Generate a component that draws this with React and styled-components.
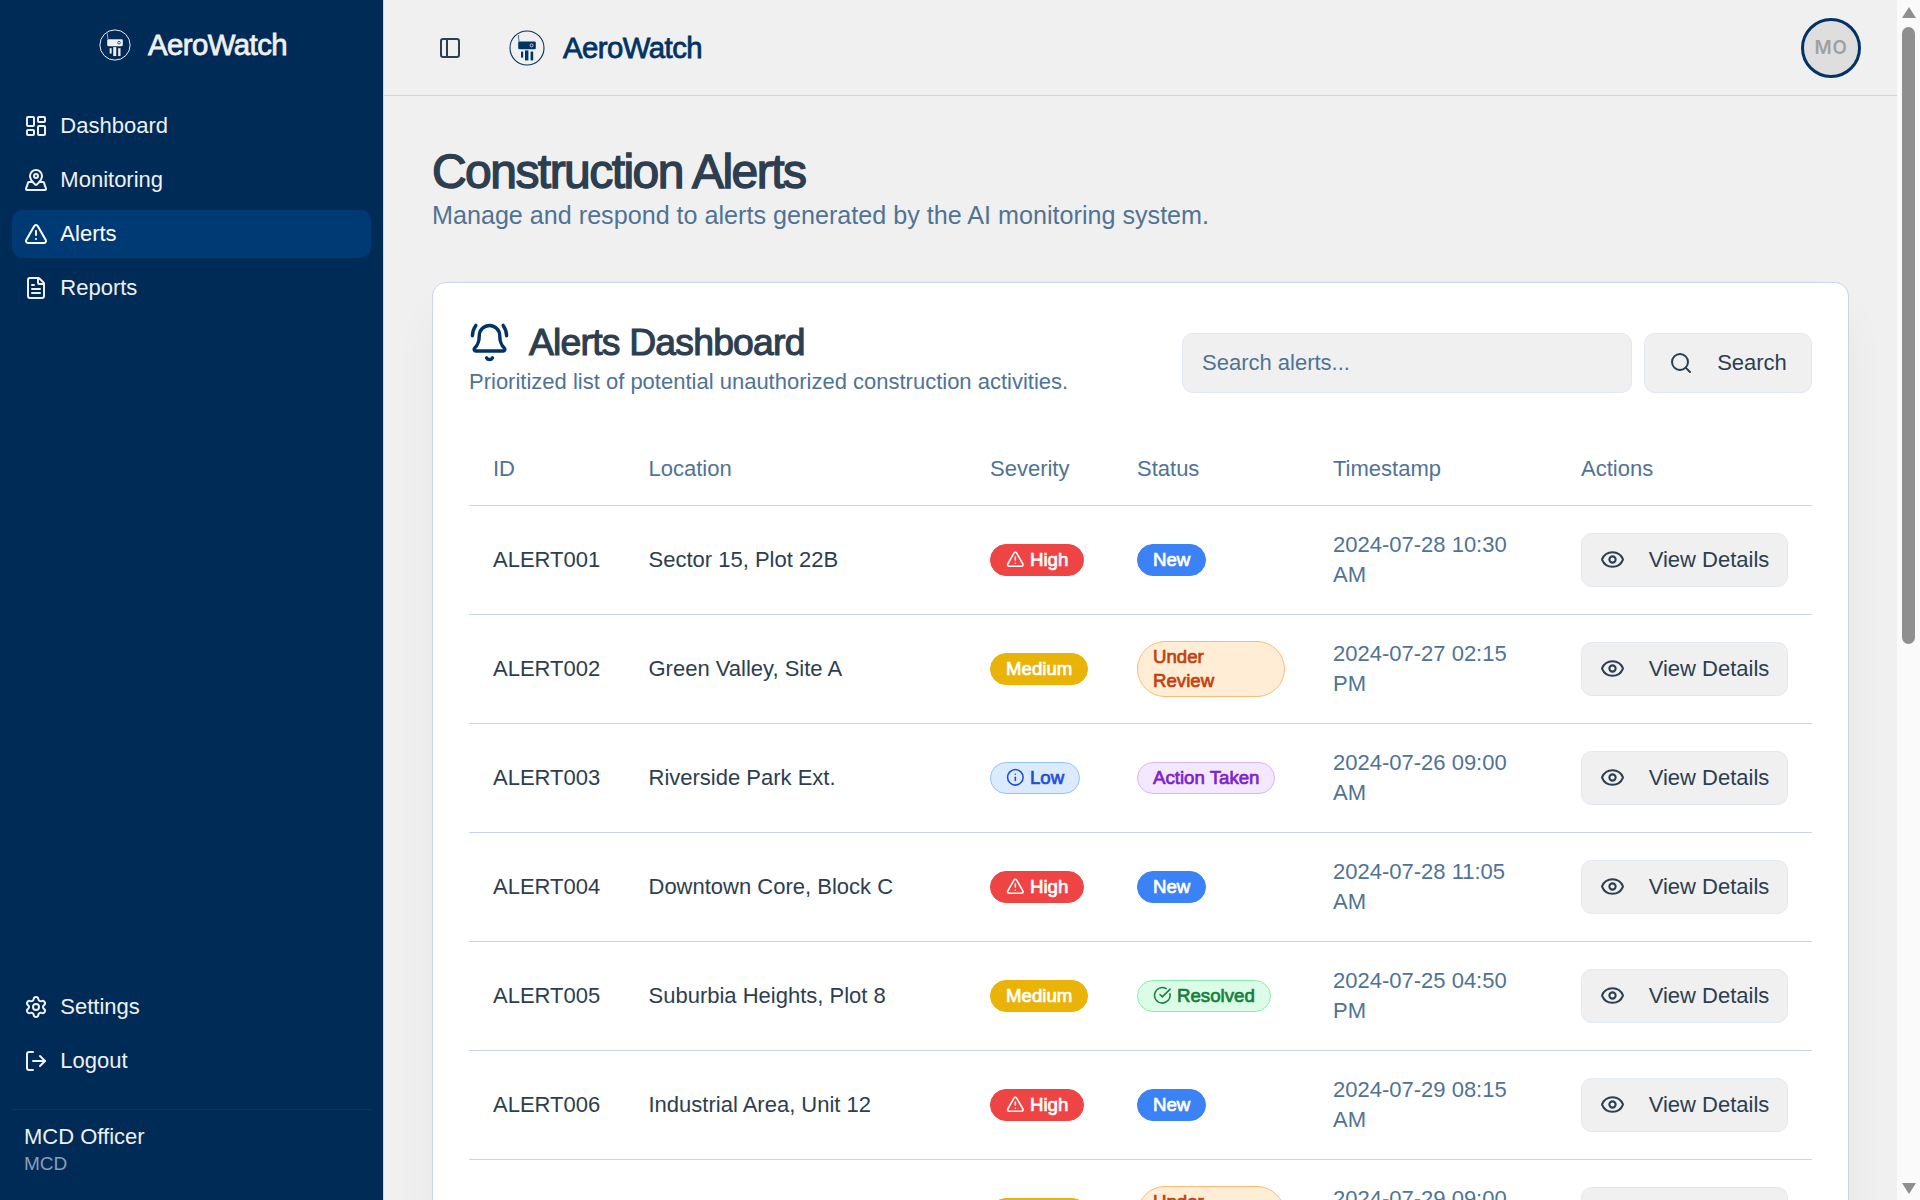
import { createGlobalStyle, styled } from "styled-components";
import {
  BellRing,
  CircleCheckBig,
  Eye,
  FileText,
  Info,
  LayoutDashboard,
  LogOut,
  MapPinned,
  PanelLeft,
  Search,
  Settings,
  TriangleAlert,
} from "lucide-react";

const GlobalStyle = createGlobalStyle`
  html, body {
    margin: 0;
    height: 100%;
    overflow: hidden;
    background: #f0f0f0;
    font-family: "Liberation Sans", Arial, sans-serif;
  }
  * {
    box-sizing: border-box;
  }
`;

const Shell = styled.div`
  display: flex;
  height: 100vh;
`;

const Sidebar = styled.aside`
  width: 384px;
  flex: none;
  display: flex;
  flex-direction: column;
  background: #002b57;
  border-right: 1px solid #c9d5e4;
  color: #eef0f2;
`;

const SidebarBrand = styled.div`
  height: 90px;
  display: flex;
  align-items: center;
  justify-content: center;
  gap: 17px;
  padding-left: 3px;
  color: #f0f0f0;
`;

const BrandName = styled.span`
  font-size: 29.33px;
  letter-spacing: -0.55px;
  -webkit-text-stroke: 0.8px currentColor;
`;

const NavList = styled.nav`
  display: flex;
  flex-direction: column;
  gap: 6px;
  padding: 12px 12px 0;
`;

const BottomNav = styled(NavList)`
  margin-top: auto;
  padding-top: 0;
  padding-bottom: 24px;
`;

const NavItem = styled.a`
  height: 48px;
  display: flex;
  align-items: center;
  gap: 12.33px;
  padding: 0 12px;
  border-radius: 10.67px;
  font-size: 22px;
  color: ${(p) => (p.$active ? "#ffffff" : "#eef0f2")};
  background: ${(p) => (p.$active ? "#003a75" : "transparent")};
`;

const UserBox = styled.div`
  margin: 0 12px;
  padding: 12px 12px 24px;
  border-top: 1px solid #00396f;
`;

const UserName = styled.div`
  font-size: 22px;
  line-height: 29px;
  color: #eef0f2;
`;

const UserRole = styled.div`
  font-size: 19px;
  line-height: 25px;
  color: #8c9db2;
`;

const Main = styled.main`
  flex: 1;
  min-width: 0;
  overflow-y: auto;
  scrollbar-width: none;
  background: #f0f0f0;
`;

// the browser hides real scrollbars when photographing, so the rail is drawn
const ScrollRail = styled.div`
  width: 23px;
  flex: none;
  display: flex;
  flex-direction: column;
  align-items: center;
  padding: 7px 0 6px;
  background: #fafafa;
`;

const ScrollArrow = styled.div`
  width: 0;
  height: 0;
  flex: none;
  border-left: 7.5px solid transparent;
  border-right: 7.5px solid transparent;
  border-${(p) => (p.$down ? "top" : "bottom")}: 11px solid #8f8f8f;
  margin-top: ${(p) => (p.$down ? "auto" : "0")};
`;

const ScrollThumb = styled.div`
  width: 13px;
  height: 617px;
  margin-top: 9px;
  border-radius: 7px;
  background: #8f8f8f;
`;

const TopBar = styled.header`
  position: sticky;
  top: 0;
  z-index: 5;
  height: 96px;
  display: flex;
  align-items: center;
  padding: 0 36px 0 54px;
  background: #f0f0f0;
  border-bottom: 1px solid #c9d5e4;
  color: #003366;
`;

const ToggleButton = styled.button`
  display: flex;
  padding: 0;
  border: 0;
  background: none;
  color: #2c3e50;
  margin-right: 47px;
`;

const TopBrand = styled.div`
  display: flex;
  align-items: center;
  gap: 18px;
`;

const Avatar = styled.div`
  margin-left: auto;
  width: 60px;
  height: 60px;
  display: flex;
  align-items: center;
  justify-content: center;
  border-radius: 50%;
  border: 3px solid #003366;
  background: #dedede;
  color: #a0a0a0;
  font-family: Inter, sans-serif;
  font-weight: 600;
  font-size: 18.67px;
  letter-spacing: 0.8px;
`;

const Content = styled.div`
  padding: 49px 48px 48px;
`;

const PageTitle = styled.h1`
  margin: 0;
  font-size: 48px;
  line-height: 54px;
  font-weight: 400;
  letter-spacing: -1.55px;
  color: #2c3e50;
  -webkit-text-stroke: 1.4px currentColor;
`;

const PageSubtitle = styled.p`
  margin: 0 0 51px;
  font-size: 25.15px;
  line-height: 32px;
  color: #4f7396;
`;

const Card = styled.section`
  padding: 36px;
  background: #ffffff;
  border: 1px solid #c9d5e4;
  border-radius: 14px;
  box-shadow: 0 26px 50px -10px rgba(0, 0, 0, 0.07);
`;

const CardHead = styled.div`
  display: flex;
  justify-content: space-between;
  align-items: flex-end;
  height: 77px;
  margin-bottom: 35px;
`;

const CardTitleRow = styled.div`
  display: flex;
  align-items: center;
  gap: 19px;
  margin-bottom: 2px;
  color: #003366;
`;

const CardTitle = styled.h2`
  margin: 0;
  font-size: 37.33px;
  line-height: 46px;
  font-weight: 400;
  letter-spacing: -0.8px;
  color: #2c3e50;
  -webkit-text-stroke: 1.1px currentColor;
`;

const CardSubtitle = styled.p`
  margin: 0;
  font-size: 22px;
  line-height: 29px;
  color: #4f7396;
`;

const SearchRow = styled.form`
  display: flex;
  gap: 12px;
  margin-bottom: 3px;
`;

const SearchInput = styled.input`
  width: 450px;
  height: 60px;
  padding: 0 19px;
  border: 1px solid #e2e8f0;
  border-radius: 10.67px;
  background: #f0f0f0;
  color: #2c3e50;
  font: inherit;
  font-size: 22px;

  &::placeholder {
    color: #4f7396;
    opacity: 1;
  }
`;

const ActionButton = styled.button`
  display: inline-flex;
  align-items: center;
  justify-content: center;
  flex: none;
  height: ${(p) => (p.$tall ? "60px" : "54px")};
  width: ${(p) => (p.$tall ? "168px" : "207px")};
  gap: 24px;
  padding: 0;
  border: 1px solid #e2e8f0;
  border-radius: 10.67px;
  background: #f0f0f0;
  color: #2c3e50;
  font: inherit;
  font-size: 22px;
`;

const Table = styled.table`
  width: 100%;
  table-layout: fixed;
  border-collapse: collapse;
`;

const HeadCell = styled.th`
  height: 74px;
  padding: 2px 24px 0;
  text-align: left;
  font-weight: 400;
  font-size: 22px;
  color: #4f7396;
  border-bottom: 1px solid #c9d5e4;
`;

const Row = styled.tr`
  height: 109px;
  border-bottom: 1px solid #c9d5e4;
`;

const Cell = styled.td`
  padding: 0 24px;
  font-size: 22px;
  line-height: 30px;
  color: ${(p) => (p.$muted ? "#4f7396" : "#2c3e50")};
`;

const badgeTones = {
  High: ["#ef4444", "#ef4444", "#ffffff"],
  Medium: ["#eab308", "#eab308", "#ffffff"],
  Low: ["#dbeafe", "#93c5fd", "#1d4ed8"],
  New: ["#3b82f6", "#3b82f6", "#ffffff"],
  "Under Review": ["#ffedd5", "#fdba74", "#c2410c"],
  "Action Taken": ["#f3e8ff", "#d8b4fe", "#7e22ce"],
  Resolved: ["#dcfce7", "#86efac", "#15803d"],
};

const Badge = styled.span`
  display: ${(p) => (p.$stacked ? "flex" : "inline-flex")};
  align-items: center;
  gap: 5.33px;
  vertical-align: middle;
  padding: 3px 15px;
  border-radius: 999px;
  border: 1px solid ${(p) => badgeTones[p.$tone][1]};
  background: ${(p) => badgeTones[p.$tone][0]};
  color: ${(p) => badgeTones[p.$tone][2]};
  font-size: 18.67px;
  line-height: 24px;
  -webkit-text-stroke: 0.7px currentColor;

  svg {
    flex: none;
  }
`;

const BadgeLabel = styled.span`
  width: ${(p) => (p.$stacked ? "min-content" : "auto")};
`;

// drone in a ring, same drawing for sidebar and top bar
const Logo = ({ size, lens }) => (
  <svg width={size} height={size} viewBox="-18 -18 36 36" fill="none">
    <circle cx="0" cy="0" r="17" stroke="currentColor" strokeWidth="1.1" />
    <path d="M-8 -6.5 L-8.6 -13" stroke="currentColor" strokeWidth="0.7" />
    <rect x="-8.8" y="-6.5" width="17.6" height="7.8" rx="1.3" fill="currentColor" />
    <circle cx="4.5" cy="-2.6" r="1.5" fill="none" stroke={lens} strokeWidth="0.8" />
    <rect x="-6" y="3.6" width="2.2" height="6" fill="currentColor" />
    <rect x="-2" y="2.4" width="3.4" height="10" fill="currentColor" />
    <rect x="3.6" y="3.6" width="2.6" height="8.8" fill="currentColor" />
  </svg>
);

const severityIcons = { High: TriangleAlert, Low: Info };
const statusIcons = { Resolved: CircleCheckBig };

const alerts = [
  ["ALERT001", "Sector 15, Plot 22B", "High", "New", "2024-07-28 10:30 AM"],
  ["ALERT002", "Green Valley, Site A", "Medium", "Under Review", "2024-07-27 02:15 PM"],
  ["ALERT003", "Riverside Park Ext.", "Low", "Action Taken", "2024-07-26 09:00 AM"],
  ["ALERT004", "Downtown Core, Block C", "High", "New", "2024-07-28 11:05 AM"],
  ["ALERT005", "Suburbia Heights, Plot 8", "Medium", "Resolved", "2024-07-25 04:50 PM"],
  ["ALERT006", "Industrial Area, Unit 12", "High", "New", "2024-07-29 08:15 AM"],
  ["ALERT007", "Old Town, Lane 4", "Medium", "Under Review", "2024-07-29 09:00 AM"],
];

const columns = [
  ["ID", 155.5],
  ["Location", 341.5],
  ["Severity", 147],
  ["Status", 196],
  ["Timestamp", 248],
  ["Actions", 255],
];

const ToneBadge = ({ label, icons }) => {
  const Icon = icons[label];
  const stacked = label === "Under Review";
  return (
    <Badge $tone={label} $stacked={stacked}>
      {Icon && <Icon size={18.67} />}
      <BadgeLabel $stacked={stacked}>{label}</BadgeLabel>
    </Badge>
  );
};

const App = () => {
  return (
    <Shell>
      <GlobalStyle />
      <Sidebar>
        <SidebarBrand>
          <Logo size={32} lens="#002b57" />
          <BrandName>AeroWatch</BrandName>
        </SidebarBrand>
        <NavList>
          <NavItem><LayoutDashboard size={24} />Dashboard</NavItem>
          <NavItem><MapPinned size={24} />Monitoring</NavItem>
          <NavItem $active><TriangleAlert size={24} />Alerts</NavItem>
          <NavItem><FileText size={24} />Reports</NavItem>
        </NavList>
        <BottomNav>
          <NavItem><Settings size={24} />Settings</NavItem>
          <NavItem><LogOut size={24} />Logout</NavItem>
        </BottomNav>
        <UserBox>
          <UserName>MCD Officer</UserName>
          <UserRole>MCD</UserRole>
        </UserBox>
      </Sidebar>
      <Main>
        <TopBar>
          <ToggleButton type="button"><PanelLeft size={24} /></ToggleButton>
          <TopBrand>
            <Logo size={36} lens="#f0f0f0" />
            <BrandName>AeroWatch</BrandName>
          </TopBrand>
          <Avatar>MO</Avatar>
        </TopBar>
        <Content>
          <PageTitle>Construction Alerts</PageTitle>
          <PageSubtitle>Manage and respond to alerts generated by the AI monitoring system.</PageSubtitle>
          <Card>
            <CardHead>
              <div>
                <CardTitleRow>
                  <BellRing size={41} strokeWidth={2} />
                  <CardTitle>Alerts Dashboard</CardTitle>
                </CardTitleRow>
                <CardSubtitle>Prioritized list of potential unauthorized construction activities.</CardSubtitle>
              </div>
              <SearchRow>
                <SearchInput placeholder="Search alerts..." />
                <ActionButton type="button" $tall><Search size={24} />Search</ActionButton>
              </SearchRow>
            </CardHead>
            <Table>
              <colgroup>
                {columns.map(([name, width]) => (
                  <col key={name} width={width} />
                ))}
              </colgroup>
              <thead>
                <tr>
                  {columns.map(([name]) => (
                    <HeadCell key={name}>{name}</HeadCell>
                  ))}
                </tr>
              </thead>
              <tbody>
                {alerts.map(([id, location, severity, status, time]) => (
                  <Row key={id}>
                    <Cell>{id}</Cell>
                    <Cell>{location}</Cell>
                    <Cell><ToneBadge label={severity} icons={severityIcons} /></Cell>
                    <Cell><ToneBadge label={status} icons={statusIcons} /></Cell>
                    <Cell $muted>{time}</Cell>
                    <Cell>
                      <ActionButton type="button"><Eye size={25} />View Details</ActionButton>
                    </Cell>
                  </Row>
                ))}
              </tbody>
            </Table>
          </Card>
        </Content>
      </Main>
      <ScrollRail>
        <ScrollArrow />
        <ScrollThumb />
        <ScrollArrow $down />
      </ScrollRail>
    </Shell>
  );
};

export default App;
